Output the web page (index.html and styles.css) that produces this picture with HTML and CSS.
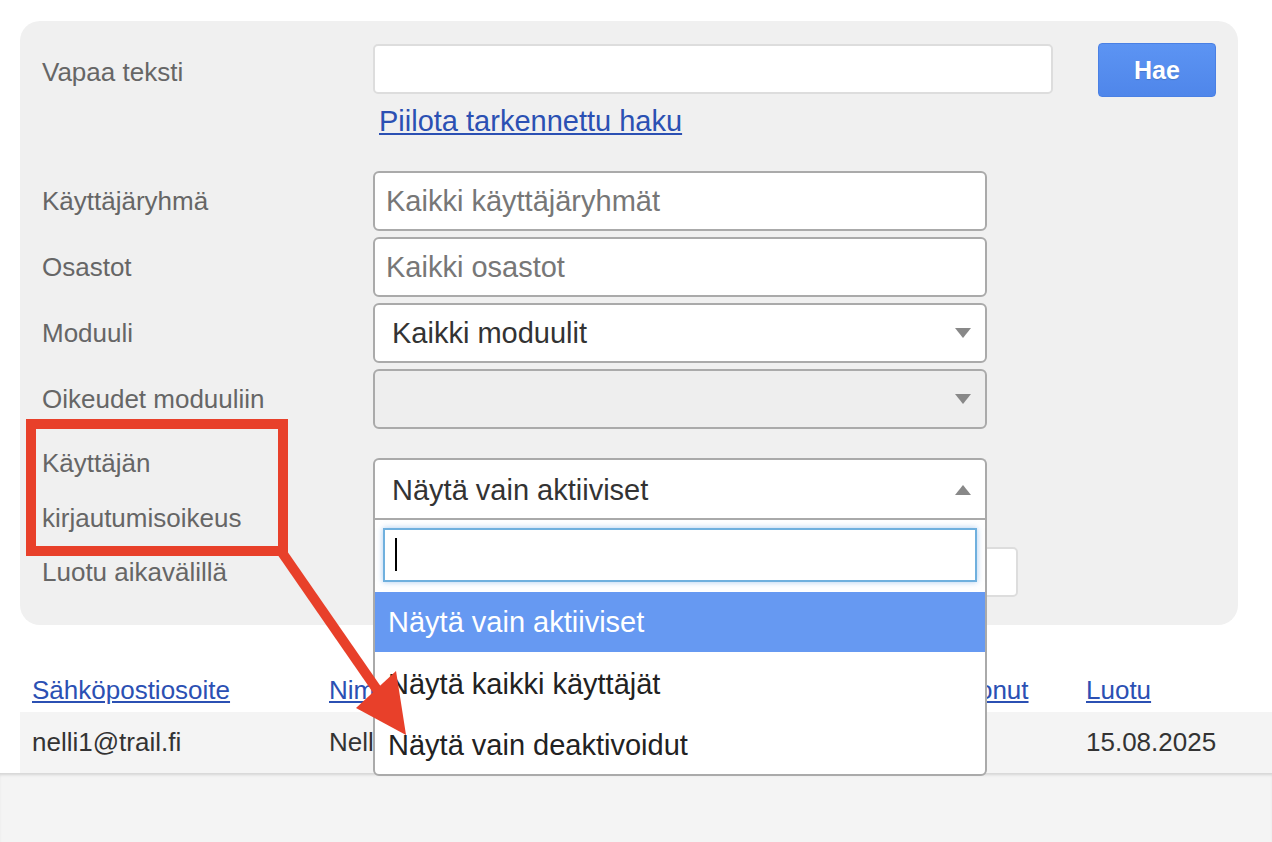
FILE: index.html
```html
<!DOCTYPE html>
<html lang="fi">
<head>
    <meta charset="utf-8">
    <link rel="stylesheet" href="styles.css">
</head>
<body>
    <form class="search-panel">
        <div class="search-row">
            <span class="label label-top">Vapaa teksti</span>
            <input class="free-text" type="text">
            <button class="btn-search" type="button">Hae</button>
        </div>
        <a class="toggle-link" href="#">Piilota tarkennettu haku</a>

        <div class="field-row first">
            <span class="label">Käyttäjäryhmä</span>
            <div class="control placeholder">Kaikki käyttäjäryhmät</div>
        </div>
        <div class="field-row">
            <span class="label">Osastot</span>
            <div class="control placeholder">Kaikki osastot</div>
        </div>
        <div class="field-row">
            <span class="label">Moduuli</span>
            <div class="control">
                Kaikki moduulit
                <svg class="caret" viewBox="0 0 16 10"><path d="M0 0h16L8 10z"/></svg>
            </div>
        </div>
        <div class="field-row">
            <span class="label">Oikeudet moduuliin</span>
            <div class="control disabled">
                <svg class="caret" viewBox="0 0 16 10"><path d="M0 0h16L8 10z"/></svg>
            </div>
        </div>

        <div class="field-row login">
            <span class="label two-line">Käyttäjän<br>kirjautumisoikeus</span>
            <div class="select-wrap">
                <div class="control open">
                    Näytä vain aktiiviset
                    <svg class="caret" viewBox="0 0 16 10"><path d="M0 10h16L8 0z"/></svg>
                </div>
                <div class="dropdown">
                    <div class="dd-search"><span class="text-cursor"></span></div>
                    <ul class="dd-options">
                        <li class="option active">Näytä vain aktiiviset</li>
                        <li class="option">Näytä kaikki käyttäjät</li>
                        <li class="option">Näytä vain deaktivoidut</li>
                    </ul>
                </div>
            </div>
        </div>

        <div class="field-row date-row">
            <span class="label">Luotu aikavälillä</span>
            <input class="date-input" type="text">
        </div>
    </form>

    <div class="results">
        <div class="results-head">
            <a href="#">Sähköpostiosoite</a>
            <a href="#">Nimi</a>
            <a href="#">Luonut</a>
            <a href="#">Luotu</a>
        </div>
        <div class="results-row">
            <span>nelli1@trail.fi</span>
            <span>Nelli</span>
            <span></span>
            <span>15.08.2025</span>
        </div>
    </div>
    <div class="footer"></div>

    <!-- annotation drawn over the screenshot -->
    <svg class="annotation" viewBox="0 0 1272 842">
        <rect x="31" y="424" width="252" height="127" fill="none" stroke="#e8402a" stroke-width="10"/>
        <line x1="281" y1="551" x2="380" y2="694" stroke="#e8402a" stroke-width="10"/>
        <polygon points="406,735 356,708 396,671" fill="#e8402a"/>
    </svg>
</body>
</html>
```

FILE: styles.css
```css
*{
    box-sizing: border-box;
}
body{
    margin: 0;
    width: 1272px;
    min-height: 842px;
    position: relative;
    font-family: "Liberation Sans", Arial, sans-serif;
    color: #333;
    background: #fff;
}
.search-panel{
    margin: 21px 34px 0 20px;
    padding: 22px 22px 28px;
    background: #f0f0f0;
    border-radius: 20px;
}
.search-row{
    display: flex;
    align-items: flex-start;
}
.label{
    width: 331px;
    flex: none;
    font-size: 26px;
    color: #666;
}
.label-top{
    line-height: 50px;
    padding-top: 4px;
}
.free-text, .date-input{
    height: 50px;
    border: 2px solid #ddd;
    border-radius: 5px;
    background: #fff;
    font-family: inherit;
    font-size: 29px;
    padding: 0 12px;
    outline: none;
}
.free-text{
    width: 680px;
    margin-top: 1px;
}
.btn-search{
    margin-left: 45px;
    width: 118px;
    height: 54px;
    border: 1px solid #4a80e4;
    border-radius: 4px;
    background: linear-gradient(#5c94f3, #4f86ea);
    color: #fff;
    font-family: inherit;
    font-size: 25px;
    font-weight: bold;
    text-shadow: 0 1px 1px rgba(0,0,0,0.15);
    cursor: pointer;
}
.toggle-link{
    display: block;
    width: fit-content;
    margin: 7px 0 0 337px;
    font-size: 29px;
    line-height: 34px;
    color: #2b50b3;
}
.field-row{
    display: flex;
    align-items: center;
    margin-top: 6px;
}
.field-row.first{
    margin-top: 33px;
}
.control{
    width: 614px;
    height: 60px;
    border: 2px solid #aaa;
    border-radius: 6px;
    background: #fff;
    display: flex;
    align-items: center;
    padding: 0 14px 0 17px;
    font-size: 29px;
    color: #333;
}
.control.placeholder{
    color: #777;
    padding-left: 11px;
}
.control.disabled{
    background: #eee;
}
.caret{
    margin-left: auto;
    width: 16px;
    height: 10px;
    fill: #888;
}
.field-row.login{
    align-items: flex-start;
    margin-top: 7px;
}
.two-line{
    line-height: 55px;
}
.select-wrap{
    position: relative;
    margin-top: 22px;
}
.control.open{
    height: 62px;
    border-bottom: none;
    border-radius: 6px 6px 0 0;
}
.dropdown{
    position: absolute;
    top: 60px;
    left: 0;
    width: 614px;
    z-index: 5;
    background: #fff;
    border: 2px solid #aaa;
    border-radius: 0 0 6px 6px;
    padding-top: 8px;
}
.dd-search{
    margin: 0 8px;
    height: 54px;
    border: 2px solid #6fb0de;
    box-shadow: 0 0 6px rgba(100,160,225,0.55);
    padding: 8px 0 0 10px;
}
.text-cursor{
    display: block;
    width: 2px;
    height: 33px;
    background: #000;
}
.dd-options{
    list-style: none;
    margin: 10px 0 0;
    padding: 0;
}
.option{
    height: 61px;
    padding: 3px 0 0 13px;
    line-height: 58px;
    font-size: 29px;
    color: #222;
}
.option.active{
    height: 60px;
    padding-top: 0;
    line-height: 60px;
    background: #6699f2;
    color: #fff;
}
.field-row.date-row{
    margin-top: 1px;
}
.date-input{
    width: 645px;
}
.results{
    margin: 47px 0 0 20px;
}
.results-head, .results-row{
    display: grid;
    grid-template-columns: 297px 620px 137px 1fr;
    padding-left: 12px;
    font-size: 26px;
    white-space: nowrap;
}
.results-head{
    padding-top: 3px;
    padding-bottom: 7px;
    line-height: 30px;
}
.results-head a{
    color: #2b50b3;
}
.results-row{
    height: 61px;
    align-items: center;
    background: #f4f4f4;
    color: #333;
}
.footer{
    height: 69px;
    background: #f4f4f4;
    box-shadow: inset 0 3px 3px -1px rgba(0,0,0,0.13);
}
.annotation{
    position: absolute;
    top: 0;
    left: 0;
    width: 1272px;
    height: 842px;
    z-index: 10;
    pointer-events: none;
}
```
